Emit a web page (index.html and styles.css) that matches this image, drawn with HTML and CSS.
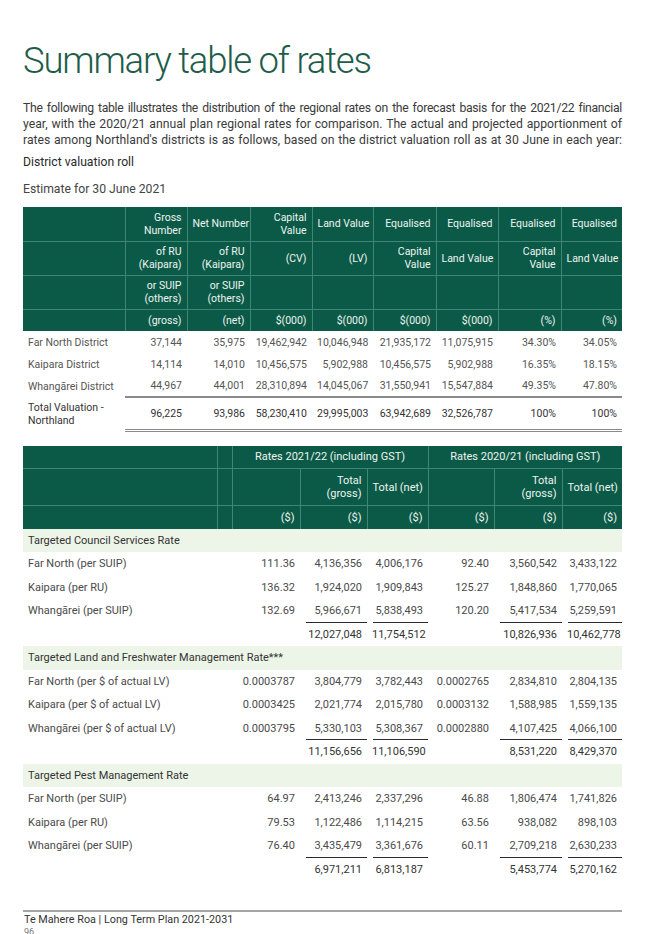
FILE: index.html
```html
<!DOCTYPE html>
<html lang="en">
<head>
<meta charset="utf-8">
<title>Summary table of rates</title>
<link rel="stylesheet" href="styles.css">
</head>
<body>
<main class="page">
  <h1 class="title">Summary table of rates</h1>
  <p class="intro">
    <span class="line tight">The following table illustrates the distribution of the regional rates on the forecast basis for the 2021/22 financial</span>
    <span class="line">year, with the 2020/21 annual plan regional rates for comparison. The actual and projected apportionment of</span>
    <span class="line">rates among Northland's districts is as follows, based on the district valuation roll as at 30 June in each year:</span>
  </p>
  <h2 class="subhead">District valuation roll</h2>
  <p class="note">Estimate for 30 June 2021</p>

  <table class="tbl valuation">
    <colgroup>
      <col class="c-label"><col class="c-num"><col class="c-num2"><col class="c-num"><col class="c-num3"><col class="c-num2"><col class="c-num"><col class="c-num2"><col class="c-num3">
    </colgroup>
    <thead>
      <tr class="h-tall">
        <th></th><th>Gross<br>Number</th><th>Net Number</th><th>Capital<br>Value</th><th>Land Value</th><th>Equalised</th><th>Equalised</th><th>Equalised</th><th>Equalised</th>
      </tr>
      <tr class="h-tall">
        <th></th><th>of RU<br>(Kaipara)</th><th>of RU<br>(Kaipara)</th><th>(CV)</th><th>(LV)</th><th>Capital<br>Value</th><th class="mid">Land Value</th><th>Capital<br>Value</th><th class="mid">Land Value</th>
      </tr>
      <tr class="h-tall">
        <th></th><th>or SUIP<br>(others)</th><th>or SUIP<br>(others)</th><th></th><th></th><th></th><th></th><th></th><th></th>
      </tr>
      <tr class="h-short">
        <th></th><th>(gross)</th><th>(net)</th><th>$(000)</th><th>$(000)</th><th>$(000)</th><th>$(000)</th><th>(%)</th><th>(%)</th>
      </tr>
    </thead>
    <tbody>
      <tr><td>Far North District</td><td>37,144</td><td>35,975</td><td>19,462,942</td><td>10,046,948</td><td>21,935,172</td><td>11,075,915</td><td>34.30%</td><td>34.05%</td></tr>
      <tr><td>Kaipara District</td><td>14,114</td><td>14,010</td><td>10,456,575</td><td>5,902,988</td><td>10,456,575</td><td>5,902,988</td><td>16.35%</td><td>18.15%</td></tr>
      <tr><td>Whangārei District</td><td>44,967</td><td>44,001</td><td>28,310,894</td><td>14,045,067</td><td>31,550,941</td><td>15,547,884</td><td>49.35%</td><td>47.80%</td></tr>
      <tr class="total"><td>Total Valuation -<br>Northland</td><td>96,225</td><td>93,986</td><td>58,230,410</td><td>29,995,003</td><td>63,942,689</td><td>32,526,787</td><td>100%</td><td>100%</td></tr>
    </tbody>
  </table>

  <table class="tbl rates">
    <colgroup>
      <col class="r-label"><col class="r-gap"><col class="r-rate"><col class="r-gross"><col class="r-net"><col class="r-rate2"><col class="r-gross2"><col class="r-net2">
    </colgroup>
    <thead>
      <tr class="h-row">
        <th></th><th></th><th colspan="3" class="center">Rates 2021/22 (including GST)</th><th colspan="3" class="center">Rates 2020/21 (including GST)</th>
      </tr>
      <tr class="h-mid">
        <th></th><th></th><th></th><th>Total<br>(gross)</th><th>Total (net)</th><th></th><th>Total<br>(gross)</th><th>Total (net)</th>
      </tr>
      <tr class="h-row">
        <th></th><th></th><th>($)</th><th>($)</th><th>($)</th><th>($)</th><th>($)</th><th>($)</th>
      </tr>
    </thead>
    <tbody>
      <tr class="band"><td colspan="8">Targeted Council Services Rate</td></tr>
      <tr><td>Far North (per SUIP)</td><td></td><td>111.36</td><td>4,136,356</td><td>4,006,176</td><td>92.40</td><td>3,560,542</td><td>3,433,122</td></tr>
      <tr><td>Kaipara (per RU)</td><td></td><td>136.32</td><td>1,924,020</td><td>1,909,843</td><td>125.27</td><td>1,848,860</td><td>1,770,065</td></tr>
      <tr class="last"><td>Whangārei (per SUIP)</td><td></td><td>132.69</td><td class="ul">5,966,671</td><td class="ul">5,838,493</td><td>120.20</td><td class="ul">5,417,534</td><td class="ul">5,259,591</td></tr>
      <tr class="sum"><td></td><td></td><td></td><td>12,027,048</td><td>11,754,512</td><td></td><td>10,826,936</td><td>10,462,778</td></tr>

      <tr class="band"><td colspan="8">Targeted Land and Freshwater Management Rate***</td></tr>
      <tr><td>Far North (per $ of actual LV)</td><td></td><td>0.0003787</td><td>3,804,779</td><td>3,782,443</td><td>0.0002765</td><td>2,834,810</td><td>2,804,135</td></tr>
      <tr><td>Kaipara (per $ of actual LV)</td><td></td><td>0.0003425</td><td>2,021,774</td><td>2,015,780</td><td>0.0003132</td><td>1,588,985</td><td>1,559,135</td></tr>
      <tr class="last"><td>Whangārei (per $ of actual LV)</td><td></td><td>0.0003795</td><td class="ul">5,330,103</td><td class="ul">5,308,367</td><td>0.0002880</td><td class="ul">4,107,425</td><td class="ul">4,066,100</td></tr>
      <tr class="sum"><td></td><td></td><td></td><td>11,156,656</td><td>11,106,590</td><td></td><td>8,531,220</td><td>8,429,370</td></tr>

      <tr class="band"><td colspan="8">Targeted Pest Management Rate</td></tr>
      <tr><td>Far North (per SUIP)</td><td></td><td>64.97</td><td>2,413,246</td><td>2,337,296</td><td>46.88</td><td>1,806,474</td><td>1,741,826</td></tr>
      <tr><td>Kaipara (per RU)</td><td></td><td>79.53</td><td>1,122,486</td><td>1,114,215</td><td>63.56</td><td>938,082</td><td>898,103</td></tr>
      <tr class="last"><td>Whangārei (per SUIP)</td><td></td><td>76.40</td><td class="ul">3,435,479</td><td class="ul">3,361,676</td><td>60.11</td><td class="ul">2,709,218</td><td class="ul">2,630,233</td></tr>
      <tr class="sum"><td></td><td></td><td></td><td>6,971,211</td><td>6,813,187</td><td></td><td>5,453,774</td><td>5,270,162</td></tr>
    </tbody>
  </table>

  <footer class="foot">
    <div class="foot-title">Te Mahere Roa | Long Term Plan 2021-2031</div>
    <div class="foot-page">96</div>
  </footer>
</main>
</body>
</html>
```

FILE: styles.css
```css
* { box-sizing: border-box; }
html, body { margin: 0; padding: 0; background: #fff; }
body {
  font-family: Roboto, "Noto Sans", "Liberation Sans", sans-serif;
  color: #3a3a3a;
  height: 934px;
  overflow: hidden;
}
.page {
  padding: 0 23px;
  width: 645px;
}
.title {
  margin: 0;
  padding-top: 39px;
  font-size: 36.5px;
  line-height: 44px;
  font-weight: 300;
  color: #1e5c4a;
  letter-spacing: -1.2px;
}
.intro {
  margin: 17px 0 0;
  font-size: 12.2px;
  line-height: 16px;
  color: #3b3b3b;
}
.intro .line {
  display: block;
  text-align: justify;
  text-align-last: justify;
  white-space: nowrap;
}
.intro .line.tight {
  letter-spacing: -0.3px;
  word-spacing: -1px;
}
.subhead {
  margin: 6px 0 0;
  font-size: 12.2px;
  line-height: 16px;
  font-weight: 400;
  color: #2a2a2a;
}
.note {
  margin: 11px 0 0;
  font-size: 12.2px;
  line-height: 16px;
  color: #444;
}

.tbl {
  border-collapse: collapse;
  table-layout: fixed;
  width: 599px;
}
.tbl th, .tbl td {
  padding: 0 5px;
  text-align: right;
  white-space: nowrap;
  overflow: hidden;
}
.tbl th {
  background: #0b5a47;
  color: #eef4f0;
  font-weight: 400;
  border-right: 1px solid #3f8772;
  border-bottom: 1px solid #3f8772;
  line-height: 13px;
}
.tbl th:last-child { border-right: none; }
.tbl thead tr:last-child th { border-bottom: none; }
.tbl th.center { text-align: center; }

.valuation { margin-top: 10px; }
.valuation .c-label { width: 102px; }
.valuation .c-num { width: 62px; }
.valuation .c-num2 { width: 63px; }
.valuation .c-num3 { width: 61px; }
.valuation th { font-size: 10.5px; }
.valuation .h-tall th { height: 34px; }
.valuation .h-short th { height: 22px; }
.valuation td {
  font-size: 10.5px;
  color: #555;
  height: 22px;
  line-height: 13px;
}
.valuation td:first-child { text-align: left; }
.valuation tr.total td {
  height: 33px;
  color: #333;
  border-bottom: 3px double #8a8a8a;
}
.valuation tr.total td:not(:first-child) { border-top: 2px solid #8a8a8a; }
.valuation tr.total td:first-child { border-bottom: none; }

.rates { margin-top: 14px; }
.rates .r-label { width: 194px; }
.rates .r-gap { width: 15px; }
.rates .r-rate { width: 68px; }
.rates .r-gross { width: 67px; }
.rates .r-net { width: 61px; }
.rates .r-rate2 { width: 66px; }
.rates .r-gross2 { width: 68px; }
.rates .r-net2 { width: 60px; }
.rates th { font-size: 11px; }
.rates .h-row th { height: 23px; }
.rates .h-mid th { height: 37px; }
.rates td {
  font-size: 11px;
  color: #4a4a4a;
  height: 23.5px;
  line-height: 13px;
}
.rates td:first-child { text-align: left; }
.rates tr.band td {
  background: #edf5e8;
  color: #333;
  text-align: left;
}
.rates td.ul {
  background: linear-gradient(#2b2b2b, #2b2b2b) no-repeat right bottom / calc(100% - 6px) 1px;
}
.rates tr.sum td { color: #333; }

.foot {
  margin-top: 29px;
  border-top: 2px solid #a5a5a5;
  padding-top: 1px;
}
.foot-title {
  font-size: 10.8px;
  line-height: 14px;
  color: #333;
  padding-left: 1px;
}
.foot-page {
  font-size: 9px;
  line-height: 11px;
  color: #777;
  padding-left: 1px;
}
```
